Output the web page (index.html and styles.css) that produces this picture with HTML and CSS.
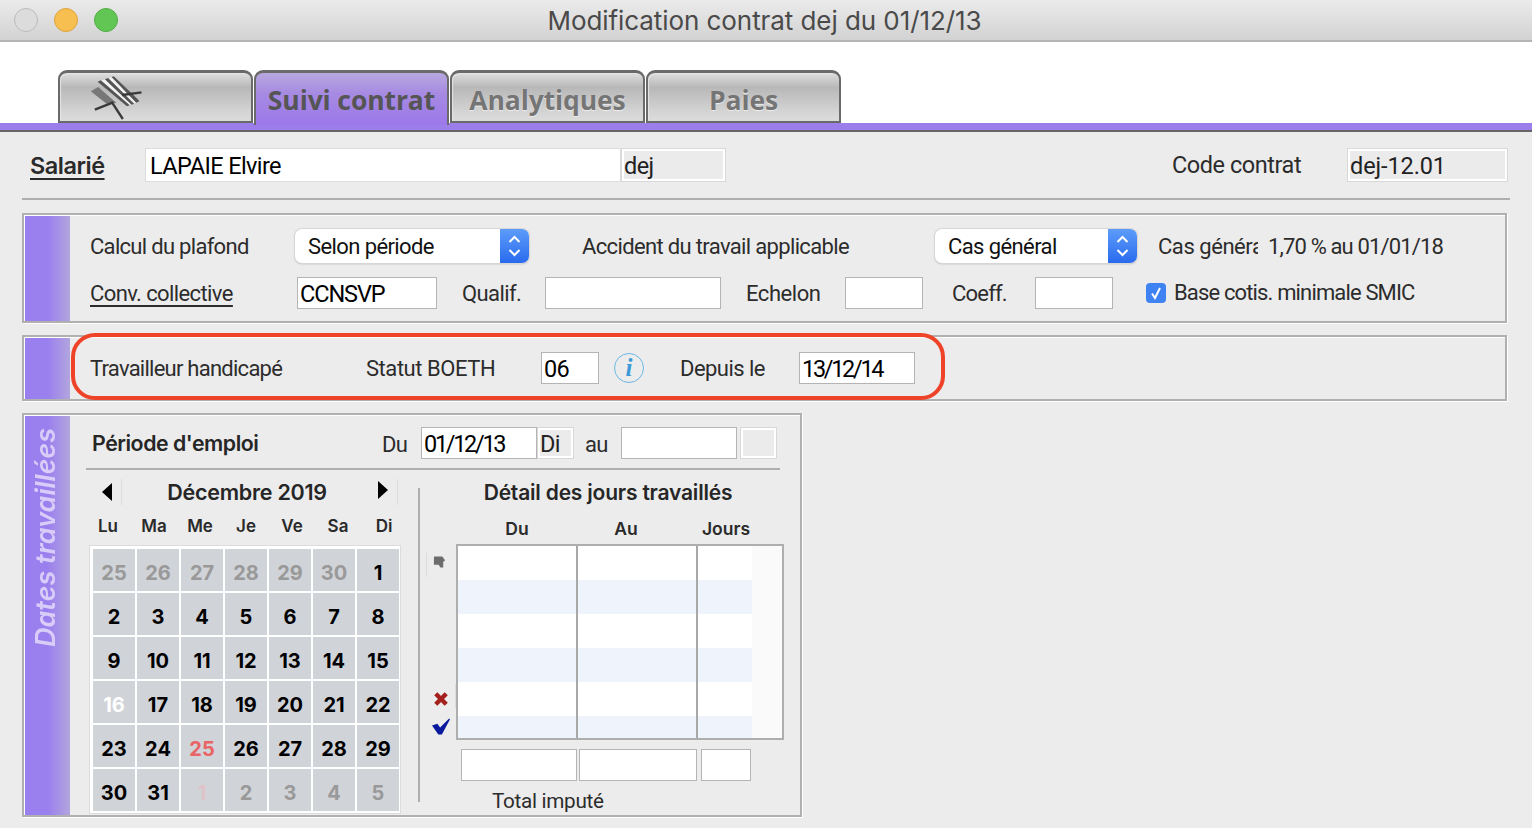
FILE: index.html
```html
<!DOCTYPE html>
<html lang="fr">
<head>
<meta charset="utf-8">
<title>Modification contrat dej du 01/12/13</title>
<link rel="stylesheet" href="styles.css">
</head>
<body>
<header class="titlebar">
  <div class="lights"><span class="light grey"></span><span class="light amber"></span><span class="light green"></span></div>
  <div class="title">Modification contrat dej du 01/12/13</div>
</header>
<nav class="tabs">
  <div class="tab">
    <svg class="chair" viewBox="120 40 170 150">
      <path d="M128 95 L150 82 L205 130 L175 132Z" fill="#777"/>
      <path d="M148 66 L197 50 L272 126 L236 140Z" fill="#f2f2f2"/>
      <path d="M148 66 L158 62 L245 137 L236 140Z M170 59 L180 55 L258 132 L250 135Z M190 52 L197 50 L272 122 L272 126 L264 129Z" fill="#555"/>
      <path d="M190 126 L224 178 M140 150 L195 128 M222 106 L280 98" stroke="#3a3a3a" stroke-width="7" fill="none"/>
    </svg>
  </div>
  <div class="tab active">Suivi contrat</div>
  <div class="tab">Analytiques</div>
  <div class="tab">Paies</div>
</nav>
<div class="tabline"></div>
<main class="main">
  <div class="row-salarie">
    <a class="salarie">Salarié</a>
    <div class="field f-name">LAPAIE Elvire</div>
    <div class="field readonly f-dej">dej</div>
    <span class="label l-code">Code contrat</span>
    <div class="field readonly f-code">dej-12.01</div>
  </div>
  <div class="rule"></div>

  <section class="box box-a">
    <div class="side"></div>
    <div class="box-body">
      <div class="line line-1">
        <span class="label w-205">Calcul du plafond</span>
        <div class="select s-1"><span>Selon période</span><i class="stepper"><svg viewBox="0 0 28 34"><path d="M9 13 L14 8 L19 13 M9 21 L14 26 L19 21" fill="none" stroke="#fff" stroke-width="2"/></svg></i></div>
        <span class="label l-acc">Accident du travail applicable</span>
        <div class="select s-2"><span>Cas général</span><i class="stepper"><svg viewBox="0 0 28 34"><path d="M9 13 L14 8 L19 13 M9 21 L14 26 L19 21" fill="none" stroke="#fff" stroke-width="2"/></svg></i></div>
        <span class="label clip">Cas général</span>
        <span class="label l-rate">1,70 % au 01/01/18</span>
      </div>
      <div class="line line-2">
        <a class="label link w-207">Conv. collective</a>
        <div class="field f-ccn">CCNSVP</div>
        <span class="label l-q">Qualif.</span>
        <div class="field f-qual"></div>
        <span class="label l-e">Echelon</span>
        <div class="field f-small"></div>
        <span class="label l-c">Coeff.</span>
        <div class="field f-small"></div>
        <span class="check"><svg viewBox="0 0 20 20"><path d="M6 10.5 L9 15 L14 5" fill="none" stroke="#fff" stroke-width="2"/></svg></span>
        <span class="label l-base">Base cotis. minimale SMIC</span>
      </div>
    </div>
  </section>

  <section class="box box-b">
    <div class="side"></div>
    <div class="box-body boeth">
      <span class="label w-276">Travailleur handicapé</span>
      <span class="label w-175">Statut BOETH</span>
      <div class="field f-06">06</div>
      <span class="info">i</span>
      <span class="label w-119">Depuis le</span>
      <div class="field f-date">13/12/14</div>
    </div>
    <div class="highlight"></div>
  </section>

  <section class="box box-c">
    <div class="side side-c"><span class="vertical">Dates travaillées</span></div>
    <div class="cal-body">
      <div class="period">
        <strong class="period-title">Période d'emploi</strong>
        <span class="label l-du">Du</span>
        <div class="field f-p1">01/12/13</div>
        <div class="field readonly f-p2">Di</div>
        <span class="label l-au">au</span>
        <div class="field f-p3"></div>
        <div class="field readonly f-p4"></div>
      </div>
      <div class="rule-c"></div>
      <div class="cal-split">
        <div class="calendar">
          <div class="month">
            <span class="arrow left"></span>
            <span class="divider d-left"></span>
            <strong class="month-name">Décembre 2019</strong>
            <span class="arrow right"></span>
            <span class="divider d-right"></span>
          </div>
          <div class="weekdays"><b>Lu</b><b>Ma</b><b>Me</b><b>Je</b><b>Ve</b><b>Sa</b><b>Di</b></div>
          <div class="days">
            <span class="o">25</span><span class="o">26</span><span class="o">27</span><span class="o">28</span><span class="o">29</span><span class="o">30</span><span>1</span>
            <span>2</span><span>3</span><span>4</span><span>5</span><span>6</span><span>7</span><span>8</span>
            <span>9</span><span>10</span><span>11</span><span>12</span><span>13</span><span>14</span><span>15</span>
            <span class="today">16</span><span>17</span><span>18</span><span>19</span><span>20</span><span>21</span><span>22</span>
            <span>23</span><span>24</span><span class="holiday">25</span><span>26</span><span>27</span><span>28</span><span>29</span>
            <span>30</span><span>31</span><span class="faint">1</span><span class="o">2</span><span class="o">3</span><span class="o">4</span><span class="o">5</span>
          </div>
        </div>
        <div class="detail">
          <strong class="detail-title">Détail des jours travaillés</strong>
          <div class="heads"><b class="h-du">Du</b><b class="h-au">Au</b><b class="h-j">Jours</b></div>
          <div class="table-wrap">
            <div class="tools">
              <span class="tool-sep ts-1"></span>
              <span class="tool-sep ts-2"></span>
              <svg class="t-up" viewBox="0 0 14 14"><path d="M1 1 H10 L13 5 L11 7 L11 13 L8 13 L6 10 L1 10Z" fill="#6c6c6c"/></svg>
              <svg class="t-x" viewBox="0 0 16 16"><path d="M2 2 L14 14 M14 2 L2 14" stroke="#a3201c" stroke-width="5"/></svg>
              <svg class="t-v" viewBox="0 0 20 18"><path d="M0 8 L6 6 L9 10 L19 0 L20 1 L11 18 L7 18Z" fill="#0a1a9c"/></svg>
            </div>
            <div class="table">
              <div class="col c1"></div><div class="col c2"></div><div class="col c3"></div><div class="scroll"></div>
            </div>
          </div>
          <div class="totals"><div class="field t1"></div><div class="field t2"></div><div class="field t3"></div></div>
          <div class="label total-lbl">Total imputé</div>
        </div>
      </div>
    </div>
  </section>
</main>
</body>
</html>
```
FILE: styles.css
```css
* { box-sizing: border-box; }
html, body { margin: 0; height: 828px; overflow: hidden; }
body { background: #ececec; font-family: Inter, "Liberation Sans", sans-serif; color: #2a2a2a; width: 1532px; }

.titlebar { height: 42px; background: linear-gradient(#ebebeb, #d2d2d2); border-bottom: 2px solid #b4b4b4; display: flex; align-items: center; position: relative; }
.lights { display: flex; gap: 16px; padding-left: 14px; }
.light { width: 24px; height: 24px; border-radius: 50%; border: 1px solid #bbb; }
.light.grey { background: #dcdcdc; }
.light.amber { background: #f6bf50; border-color: #dda43c; }
.light.green { background: #62c655; border-color: #52ad45; }
.title { position: absolute; left: 0; right: 3px; text-align: center; font-size: 26px; color: #4a4a4a; letter-spacing: -0.07px; }

.tabs { height: 81px; background: #fff; padding: 28px 0 0 58px; display: flex; gap: 1px; }
.tab { width: 195px; height: 53px; border: 2px solid #6a6a6a; border-top-width: 3px; border-radius: 9px 9px 0 0; background: linear-gradient(#dedede 0, #b8b8b8 30%, #d6d6d6 85%, #dcdcdc); box-shadow: inset 1px 1px 1px #e4e4e4; font-family: "Open Sans", sans-serif; font-weight: bold; font-size: 26.5px; letter-spacing: -0.1px; color: #757575; text-align: center; line-height: 54px; text-shadow: 0 1px 1px #eee; }
.tab.active { background: linear-gradient(#b8a8de 0, #a68ae2 40%, #9c78ea); border-bottom: 0; color: #555; box-shadow: none; height: 55px; text-shadow: none; }
.chair { width: 57px; height: 50px; display: block; margin-left: 28px; filter: blur(0.5px); }
.tabline { height: 9px; background: #9c7eea; border-bottom: 2px solid #666; }

.main { padding-top: 16px; }
.row-salarie { display: flex; align-items: center; height: 34px; padding-left: 30px; }
.salarie { width: 115px; font-weight: 600; font-size: 23.5px; letter-spacing: -0.5px; text-decoration: underline; text-decoration-thickness: 2px; text-underline-offset: 4px; }
.label { font-family: Roboto, sans-serif; font-size: 22px; letter-spacing: -0.6px; white-space: nowrap; color: #2c2c2c; }
.field { background: #fff; border: 1px solid #b4b4b4; font-family: Roboto, sans-serif; font-size: 23.5px; letter-spacing: -0.6px; color: #000; height: 32px; line-height: 32px; padding-left: 2px; white-space: nowrap; overflow: hidden; flex: none; }
.field.readonly { background: #ebebeb; border: 1px solid #d8d8d8; box-shadow: inset 0 0 0 2px #fff; color: #222; }
.f-name { width: 476px; height: 34px; border-color: #dcdcdc; padding-left: 4px; line-height: 35px; }
.f-dej { width: 105px; height: 34px; line-height: 35px; }
.l-code { margin-left: 446px; width: 175px; font-size: 23.5px; letter-spacing: -0.45px; }
.f-code { width: 161px; height: 34px; line-height: 35px; letter-spacing: -0.1px; }
.rule { height: 2px; background: #aeaeae; margin: 16px 22px 13px 22px; }

.box { margin-left: 22px; width: 1485px; border: 2px solid #b0b0b0; box-shadow: inset 1px 1px 0 #fff, 1px 1px 0 #fff; display: flex; position: relative; }
.side { width: 45px; flex: none; margin: 1px 0 0 1px; background: linear-gradient(90deg, #9a7fee 50%, #b2a5de); }
.box-a { height: 110px; margin-bottom: 12px; }
.box-b { height: 66px; margin-bottom: 12px; }
.box-c { height: 404px; width: 780px; }
.box-body { flex: 1; padding-left: 20px; }
.line { display: flex; align-items: center; }
.line-1 { height: 34px; margin-top: 14px; }
.line-2 { height: 32px; margin-top: 14px; }
.w-205 { width: 205px; letter-spacing: -0.7px; }
.w-207 { width: 207px; }
.link { text-decoration: underline; text-decoration-thickness: 2px; text-underline-offset: 4px; }
.select { width: 234px; height: 34px; border-radius: 7px; background: #fff; box-shadow: 0 0 0 1px #d6d6d6, 0 1px 2px #aaa; display: flex; justify-content: space-between; align-items: center; padding-left: 13px; font-family: Roboto, sans-serif; font-size: 22px; letter-spacing: -0.6px; color: #111; overflow: hidden; flex: none; }
.s-2 { width: 202px; }
.stepper { width: 29px; height: 34px; background: linear-gradient(#5d9cf9, #2a6bef); display: block; }
.stepper svg { display: block; width: 29px; height: 34px; }
.l-acc { margin-left: 53px; width: 353px; letter-spacing: -0.65px; }
.clip { margin-left: 21px; width: 100px; overflow: hidden; letter-spacing: -0.45px; }
.l-rate { margin-left: 10px; letter-spacing: -0.85px; }
.f-ccn { width: 140px; letter-spacing: -1.1px; }
.l-q { margin-left: 25px; width: 83px; }
.f-qual { width: 176px; }
.l-e { margin-left: 25px; width: 99px; letter-spacing: -0.45px; }
.f-small { width: 78px; }
.l-c { margin-left: 29px; width: 83px; letter-spacing: -0.8px; }
.check { width: 20px; height: 20px; border-radius: 4px; background: #3f82f3; margin-left: 33px; flex: none; }
.check svg { display: block; }
.l-base { margin-left: 8px; position: relative; top: -1px; letter-spacing: -0.85px; }

.boeth { display: flex; align-items: center; height: 62px; }
.w-276 { width: 276px; letter-spacing: -0.75px; }
.w-175 { width: 175px; letter-spacing: -0.45px; }
.w-119 { width: 119px; letter-spacing: -0.55px; }
.f-06 { width: 58px; }
.info { width: 30px; height: 30px; border: 1.5px solid #6ab8e6; border-radius: 50%; color: #3d9ad8; font: italic bold 25px/27px "Liberation Serif", serif; text-align: center; margin: 0 36px 0 15px; flex: none; }
.f-date { width: 116px; letter-spacing: -2.3px; }
.highlight { position: absolute; left: 47px; top: -4px; width: 874px; height: 67px; border: 4px solid #ee4328; border-radius: 24px; }

.side-c { display: flex; justify-content: center; padding-top: 13px; }
.vertical { writing-mode: vertical-rl; transform: rotate(180deg); font-style: italic; font-weight: 600; font-size: 27px; color: #d8cdf8; height: 218px; text-align: left; white-space: nowrap; margin-right: 5px; }
.cal-body { flex: 1; padding: 12px 0 0 16px; }
.period { display: flex; align-items: center; height: 32px; padding-left: 6px; }
.period-title { font-size: 21.3px; font-weight: 600; letter-spacing: -0.45px; width: 290px; color: #262626; }
.l-du { width: 39px; position: relative; top: 1px; }
.f-p1 { width: 116px; letter-spacing: -2.3px; }
.f-p2 { width: 37px; }
.l-au { margin-left: 11px; width: 36px; position: relative; top: 1px; }
.f-p3 { width: 116px; }
.f-p4 { width: 37px; margin-left: 3px; }
.rule-c { height: 2px; background: #aeaeae; margin: 9px 20px 0 0; }
.cal-split { display: flex; }
.calendar { width: 332px; padding-left: 3px; flex: none; }
.month { display: flex; align-items: center; height: 31px; margin-top: 6px; }
.arrow { width: 0; height: 0; border-top: 9px solid transparent; border-bottom: 9px solid transparent; flex: none; }
.arrow.left { border-right: 10px solid #000; margin-left: 13px; }
.arrow.right { border-left: 10px solid #000; position: relative; top: -2px; }
.divider { width: 1px; height: 26px; background: #dcdcdc; flex: none; margin-left: 9px; }
.month-name { width: 240px; margin: 0 11px 0 5px; font-size: 21.5px; font-weight: 600; letter-spacing: -0.25px; text-align: center; color: #262626; }
.weekdays { display: grid; grid-template-columns: repeat(7, 46px); margin: 6px 0 0 -4px; height: 26px; font-size: 17px; line-height: 26px; text-align: center; color: #2a2a2a; }
.weekdays b { font-weight: 600; }
.days { margin-top: 6px; width: 312px; height: 269px; background: #fff; border: 1px solid #dcdcdc; padding: 3px; display: grid; grid-template-columns: repeat(7, 42px); grid-auto-rows: 42px; gap: 2px; }
.days span { background: #d0d3d8; text-align: center; font-weight: 700; font-size: 20px; line-height: 48px; color: #000; }
.days .o { color: #999; }
.days .today { color: #fff; }
.days .holiday { color: #e96464; }
.days .faint { color: #dfc3c8; }

.detail { width: 366px; height: 314px; margin-top: 18px; border-left: 2px solid #aeaeae; padding-left: 8px; flex: none; }
.detail-title { display: block; text-align: center; font-size: 21px; font-weight: 600; letter-spacing: -0.2px; color: #262626; width: 360px; line-height: 26px; margin-top: -8px; }
.heads { display: flex; height: 24px; margin-top: 11px; font-size: 17.5px; line-height: 24px; text-align: center; color: #2a2a2a; }
.heads b { font-weight: 600; }
.h-du { width: 176px; padding-left: 2px; }
.h-au { width: 42px; margin-left: 1px; }
.h-j { width: 60px; margin-left: 49px; }
.table-wrap { display: flex; margin-top: 3px; }
.tools { width: 28px; height: 196px; position: relative; flex: none; }
.tools svg { position: absolute; }
.tool-sep { position: absolute; width: 1px; height: 24px; background: #dcdcdc; }
.ts-1 { left: -2px; top: 9px; }
.ts-2 { left: 27px; top: 140px; }
.t-up { left: 5px; top: 11px; width: 13px; height: 14px; }
.t-x { left: 6px; top: 148px; width: 14px; height: 14px; }
.t-v { left: 4px; top: 174px; width: 18px; height: 17px; }
.table { width: 328px; height: 196px; border: 2px solid #aeaeae; display: flex; flex: none; background: repeating-linear-gradient(#fff 0, #fff 34px, #eef3fc 34px, #eef3fc 68px); }
.col { height: 100%; }
.c1, .c2 { width: 120px; border-right: 2px solid #a8a8a8; }
.c3 { width: 54px; }
.scroll { flex: 1; background: #fafafa; }
.totals { display: flex; margin: 9px 0 0 33px; }
.totals .field { height: 32px; }
.t1 { width: 116px; }
.t2 { width: 118px; margin-left: 2px; }
.t3 { width: 50px; margin-left: 4px; }
.total-lbl { margin: 8px 0 0 64px; font-size: 20.7px; letter-spacing: -0.3px; }
```
